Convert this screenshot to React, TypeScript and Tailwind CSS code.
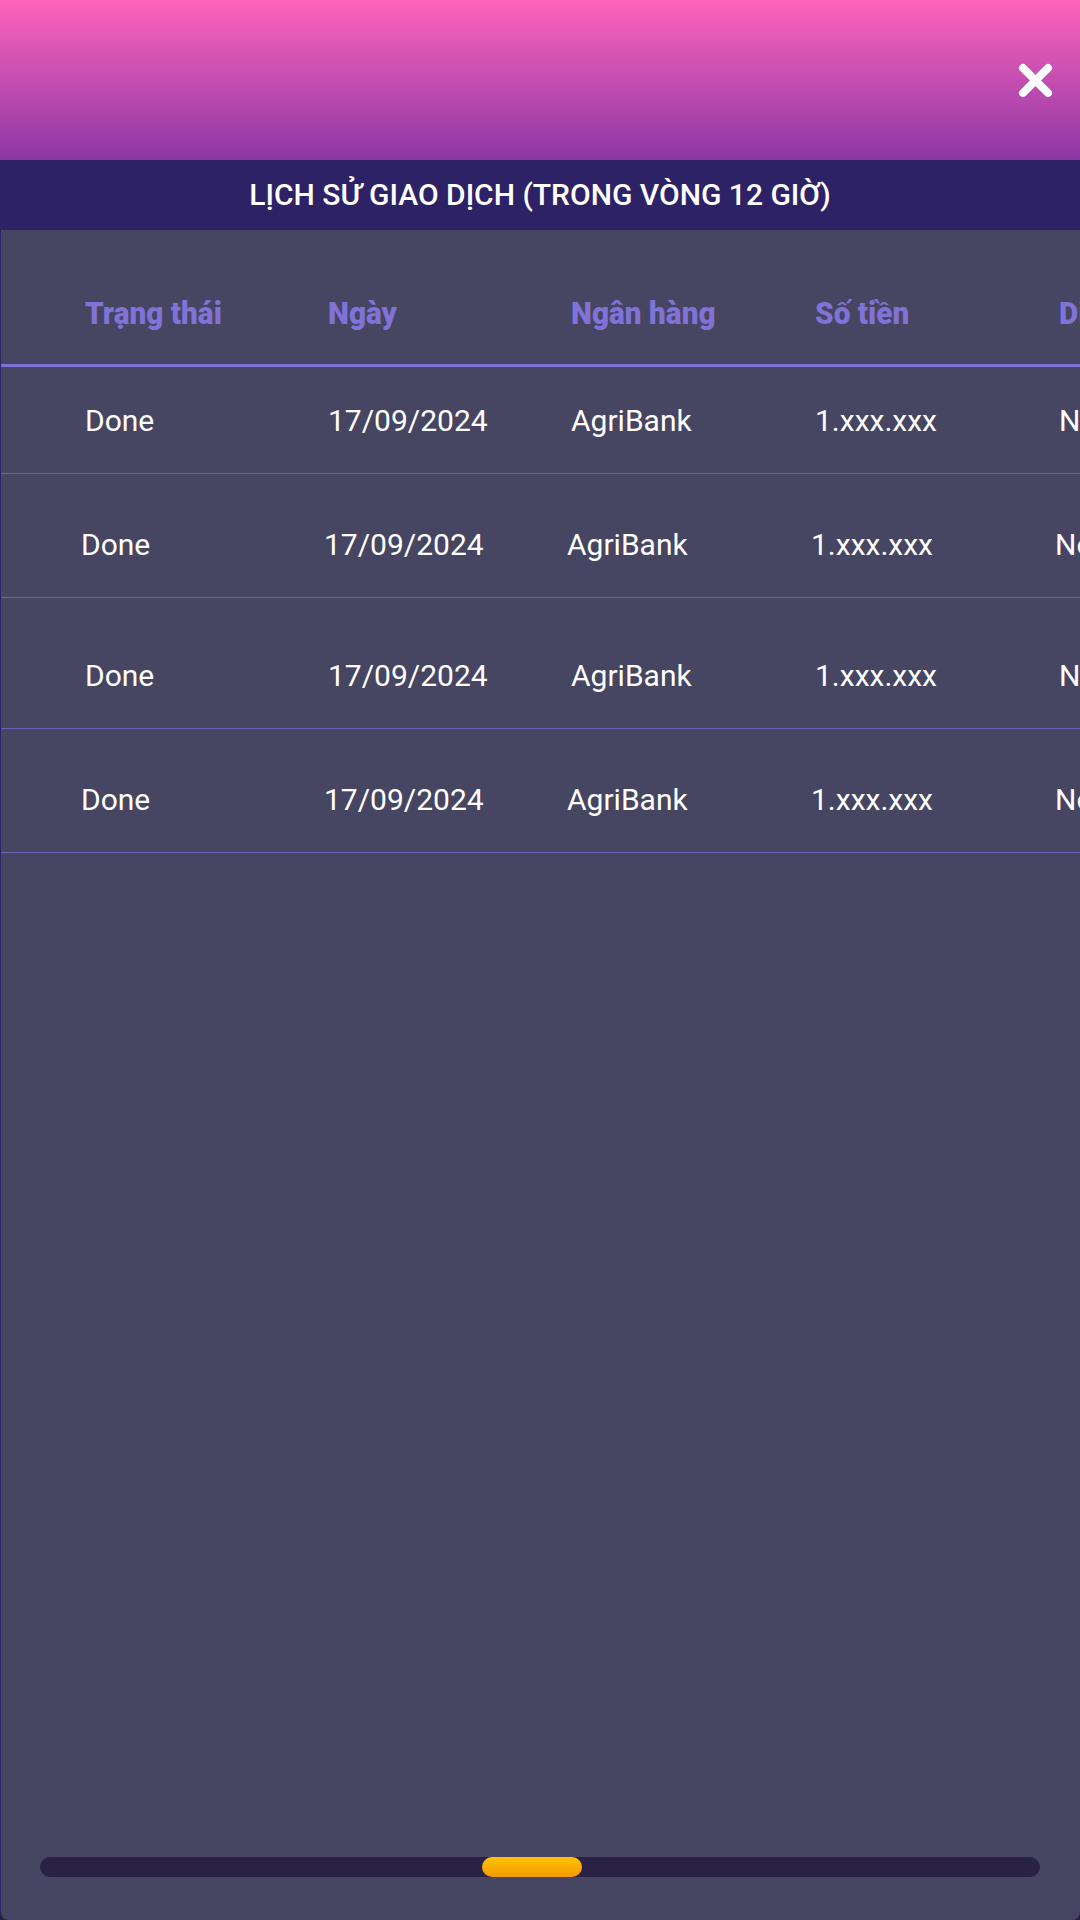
// Transaction history popup (last 12 hours)
const columns = ["Trạng thái", "Ngày", "Ngân hàng", "Số tiền", "Diễn giải"]

// each row keeps its own spacing, the source table is not perfectly even
const rows = [
  { cls: "h-[107px] pt-[39px] pl-[84px]", cells: ["Done", "17/09/2024", "AgriBank", "1.xxx.xxx", "Nội dung"] },
  { cls: "h-[124px] pt-[56px] pl-[80px]", cells: ["Done", "17/09/2024", "AgriBank", "1.xxx.xxx", "Nội dung"] },
  { cls: "h-[131px] pt-[63px] pl-[84px]", cells: ["Done", "17/09/2024", "AgriBank", "1.xxx.xxx", "Nội dung"] },
  { cls: "h-[124px] pt-[56px] pl-[80px]", cells: ["Done", "17/09/2024", "AgriBank", "1.xxx.xxx", "Nội dung"] },
]

function CloseIcon() {
  return (
    <svg width="35" height="35" viewBox="0 0 35 35" fill="none">
      <path d="M5 5L30 30M30 5L5 30" stroke="white" strokeWidth="8" strokeLinecap="round" />
    </svg>
  )
}

export default function App() {
  return (
    <div className="w-[1080px] h-[1920px] flex flex-col bg-[#2a2245] font-['Roboto',sans-serif] overflow-hidden">
      {/* top gradient with close button */}
      <div className="h-[160px] shrink-0 bg-gradient-to-b from-[#ff63ba] to-[#8d35a5] flex items-center justify-end pr-[27px]">
        <CloseIcon />
      </div>

      {/* title bar */}
      <div className="h-[70px] shrink-0 bg-[#2d2266] flex items-center justify-center">
        <h1 className="text-white text-[30px] font-medium leading-none whitespace-nowrap">
          LỊCH SỬ GIAO DỊCH (TRONG VÒNG 12 GIỜ)
        </h1>
      </div>

      {/* table panel */}
      <div className="flex-1 flex flex-col bg-[#464562] border-l border-[#2d2266] rounded-b-[8px] overflow-hidden">
        <div className="h-[137px] shrink-0 pt-[67px] pl-[84px] border-b-[3px] border-[#7d70d6] grid grid-cols-[243px_243px_244px_244px_244px] whitespace-nowrap">
          {columns.map((c) => (
            <div key={c} className="text-[32px] leading-none font-black text-[#8072d6]">
              <span className="inline-block origin-left scale-x-[0.93]">{c}</span>
            </div>
          ))}
        </div>

        {rows.map((r, i) => (
          <div
            key={i}
            className={`${r.cls} shrink-0 border-b border-[#6a62b8] grid grid-cols-[243px_243px_244px_244px_244px] whitespace-nowrap`}
          >
            {r.cells.map((c, j) => (
              <div key={j} className="text-[30px] leading-none text-white">
                {c}
              </div>
            ))}
          </div>
        ))}

        {/* horizontal scrollbar */}
        <div className="mt-auto mb-[43px] ml-[39px] w-[1000px] h-[20px] rounded-full bg-[#2a2245] flex">
          <div className="ml-[442px] w-[100px] h-full rounded-full bg-gradient-to-b from-[#ffc300] to-[#f29a00]" />
        </div>
      </div>
    </div>
  )
}
